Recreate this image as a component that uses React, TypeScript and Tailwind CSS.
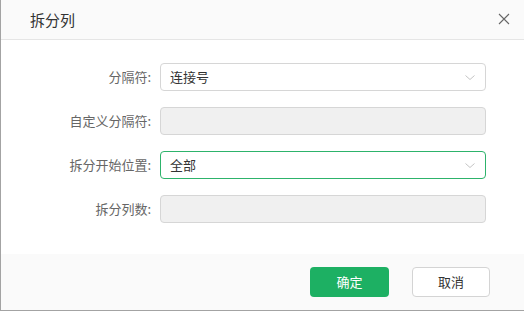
import React from 'react';

const FONT = '"Noto Sans CJK SC", "Noto Sans", sans-serif';

const Chevron = () => (
  <svg width="10" height="5" viewBox="0 0 10 5" fill="none" className="shrink-0">
    <path d="M0.5 0.5 L5 4.5 L9.5 0.5" stroke="#c4c4c4" strokeWidth="1" />
  </svg>
);

const Row: React.FC<{ label: string; children: React.ReactNode }> = ({ label, children }) => (
  <div className="flex items-center h-[28px]">
    <div className="w-[151px] pr-[1px] text-right text-[13px] text-[#666]">{label}</div>
    <div className="ml-[8px] w-[326px] h-full">{children}</div>
  </div>
);

const Select: React.FC<{ value: string; focused?: boolean }> = ({ value, focused }) => (
  <div
    className={`h-full flex items-center justify-between pl-[9px] pr-[10px] rounded-[4px] bg-white border ${
      focused ? 'border-[#2db36b]' : 'border-[#d6d6d6]'
    }`}
  >
    <span className="text-[13px] text-[#333]">{value}</span>
    <Chevron />
  </div>
);

const Disabled = () => <div className="h-full rounded-[4px] bg-[#f0f0f0] border border-[#d6d6d6]" />;

export default function App() {
  return (
    <div className="w-[524px] h-[311px] bg-white" style={{ fontFamily: FONT }}>
      <div className="w-full h-full flex flex-col border-l border-b border-[#a3a3a3]">
        <div className="h-[40px] shrink-0 flex items-center justify-between bg-[#fafafa] border-b border-[#e5e5e5] pl-[29px] pr-[14px]">
          <span className="text-[15px] text-[#333] mt-[2px]">拆分列</span>
          <svg width="12" height="12" viewBox="0 0 12 12" className="-mt-[2px]">
            <path d="M1 1 L11 11 M11 1 L1 11" stroke="#666" strokeWidth="1.1" />
          </svg>
        </div>
        <div className="flex-1 flex flex-col gap-[16px] pt-[23px]">
          <Row label="分隔符:">
            <Select value="连接号" />
          </Row>
          <Row label="自定义分隔符:">
            <Disabled />
          </Row>
          <Row label="拆分开始位置:">
            <Select value="全部" focused />
          </Row>
          <Row label="拆分列数:">
            <Disabled />
          </Row>
        </div>
        <div className="h-[56px] shrink-0 bg-[#fafafa] flex items-start justify-end gap-[23px] pt-[13px] pr-[34px]">
          <button className="w-[79px] h-[30px] rounded-[4px] bg-[#1db063] text-white text-[13px]">确定</button>
          <button className="w-[78px] h-[30px] rounded-[4px] bg-white border border-[#d4d4d4] text-[#333] text-[13px]">
            取消
          </button>
        </div>
      </div>
    </div>
  );
}
